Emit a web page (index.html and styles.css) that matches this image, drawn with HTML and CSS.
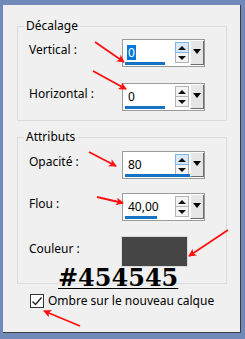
FILE: index.html
```html
<!DOCTYPE html>
<html lang="fr">
<head>
    <meta charset="UTF-8">
    <title>Ombre portée</title>
    <link rel="stylesheet" href="styles.css">
</head>
<body>
    <div class="window">
        <div class="panel">
            <fieldset class="group">
                <legend>Décalage</legend>
                <div class="rows rows-offset">
                    <div class="row">
                        <label>Vertical :</label>
                        <div class="spin">
                            <div class="field">
                                <span class="value sel">0</span>
                                <div class="bar" style="width:40px"></div>
                            </div>
                            <div class="steps">
                                <span class="step up hot"><i></i></span>
                                <span class="step down"><i></i></span>
                            </div>
                            <div class="drop"><i></i></div>
                        </div>
                    </div>
                    <div class="row">
                        <label>Horizontal :</label>
                        <div class="spin">
                            <div class="field">
                                <span class="value">0</span>
                                <div class="bar" style="width:40px"></div>
                            </div>
                            <div class="steps">
                                <span class="step up"><i></i></span>
                                <span class="step down"><i></i></span>
                            </div>
                            <div class="drop"><i></i></div>
                        </div>
                    </div>
                </div>
            </fieldset>

            <fieldset class="group group-attr">
                <legend>Attributs</legend>
                <div class="rows rows-attr">
                    <div class="row">
                        <label>Opacité :</label>
                        <div class="spin">
                            <div class="field">
                                <span class="value">80</span>
                                <div class="bar" style="width:65px"></div>
                            </div>
                            <div class="steps">
                                <span class="step up hot"><i></i></span>
                                <span class="step down"><i></i></span>
                            </div>
                            <div class="drop"><i></i></div>
                        </div>
                    </div>
                    <div class="row">
                        <label>Flou :</label>
                        <div class="spin">
                            <div class="field">
                                <span class="value">40,00</span>
                                <div class="bar" style="width:32px"></div>
                            </div>
                            <div class="steps">
                                <span class="step up"><i></i></span>
                                <span class="step down"><i></i></span>
                            </div>
                            <div class="drop"><i></i></div>
                        </div>
                    </div>
                    <div class="row row-color">
                        <label>Couleur :</label>
                        <div class="swatch"></div>
                    </div>
                </div>
            </fieldset>

            <label class="check">
                <span class="box">
                    <svg width="12" height="12" viewBox="0 0 12 12"><path d="M1.5 6.5 L4.5 9.5 L10.5 2.5" fill="none" stroke="#222" stroke-width="1.4"/></svg>
                </span>
                Ombre sur le nouveau calque
            </label>
        </div>

        <div class="note">#454545</div>

        <svg class="arrows" width="245" height="339" viewBox="0 0 245 339">
            <defs>
                <marker id="head" markerWidth="8" markerHeight="8" refX="7" refY="4" orient="auto" markerUnits="userSpaceOnUse">
                    <path d="M0 0 L8 4 L0 8 L2 4 Z" fill="#ff1010"/>
                </marker>
            </defs>
            <g stroke="#ff1010" stroke-width="1.8" marker-end="url(#head)">
                <line x1="95" y1="42" x2="124" y2="62"/>
                <line x1="93" y1="71" x2="126" y2="89"/>
                <line x1="89" y1="152" x2="116" y2="166"/>
                <line x1="97" y1="197" x2="123" y2="203"/>
                <line x1="228" y1="230" x2="189" y2="256"/>
                <line x1="80" y1="326" x2="44" y2="311"/>
            </g>
        </svg>
    </div>
</body>
</html>
```

FILE: styles.css
```css
body {
    margin: 0;
    background: #7189b9;
    font-family: "Noto Sans", "Open Sans", sans-serif;
    font-size: 12px;
    color: #000;
}

.window {
    position: relative;
    width: 245px;
    height: 339px;
    box-sizing: border-box;
    padding: 5px 4px 6px 3px;
}

.panel {
    height: 100%;
    box-sizing: border-box;
    background: #f0f0f0;
    border-right: 1px solid #3c3c3c;
    border-bottom: 1px solid #3c3c3c;
    padding: 13px 13px 0 14px;
}

.group {
    margin: 0;
    padding: 0;
    border: 1px solid #dcdcdc;
    min-width: 0;
}

.group legend {
    margin-left: 6px;
    padding: 0 2px;
    line-height: 16px;
}

.group-attr {
    margin-top: 8px;
}

.rows {
    display: flex;
    flex-direction: column;
    padding-left: 11px;
}

.rows-offset {
    padding-top: 5px;
    padding-bottom: 9px;
    gap: 16px;
}

.rows-attr {
    padding-top: 6px;
    padding-bottom: 16px;
    gap: 14px;
}

.row {
    display: grid;
    grid-template-columns: 93px 83px;
    align-items: start;
}

.row label {
    line-height: 16px;
    padding-top: 3px;
}

.row-color {
    margin-top: 1px;
}

.row-color label {
    padding-top: 5px;
}

/* spin box */
.spin {
    position: relative;
    display: flex;
    height: 28px;
    box-sizing: border-box;
    border: 1px solid #9a9a9a;
    background: #fff;
}

.field {
    position: relative;
    flex: 1;
}

.value {
    position: absolute;
    left: 4px;
    top: 5px;
    line-height: 15px;
    padding: 0 1px;
}

.value.sel {
    background: #0078d7;
    color: #fff;
}

.bar {
    position: absolute;
    left: 2px;
    bottom: 1px;
    height: 3px;
    background: #1672c4;
}

.steps {
    display: flex;
    flex-direction: column;
    margin: 2px 1px 0 0;
}

.step {
    width: 12px;
    height: 9px;
    border: 1px solid #b4b4b4;
    background: #f4f4f4;
    display: flex;
    align-items: center;
    justify-content: center;
}

.step.down {
    border-top: none;
}

.step.hot {
    background: #d8eaf9;
    border-color: #7eb4ea;
}

.step i {
    width: 0;
    height: 0;
    border-left: 4px solid transparent;
    border-right: 4px solid transparent;
}

.step.up i {
    border-bottom: 4px solid #111;
}

.step.down i {
    border-top: 4px solid #111;
}

.drop {
    width: 12px;
    margin: 1px 0 1px 0;
    background: #e6e6e6;
    border-left: 1px solid #fff;
    border-right: 1px solid #6d6d6d;
    border-bottom: 1px solid #6d6d6d;
    display: flex;
    justify-content: center;
}

.drop i {
    margin-top: 8px;
    width: 0;
    height: 0;
    border-left: 4px solid transparent;
    border-right: 4px solid transparent;
    border-top: 5px solid #000;
}

.swatch {
    width: 67px;
    height: 31px;
    margin-left: -1px;
    background: #454545;
    border: 1px solid #dadada;
    box-sizing: border-box;
}

/* checkbox */
.check {
    display: flex;
    align-items: center;
    gap: 4px;
    margin: 9px 0 0 13px;
    line-height: 16px;
}

.box {
    width: 14px;
    height: 14px;
    box-sizing: border-box;
    border: 1px solid #333;
    background: #fff;
    display: flex;
    align-items: center;
    justify-content: center;
}

/* annotations */
.note {
    position: absolute;
    left: 58px;
    top: 265px;
    font-family: "DejaVu Serif", serif;
    font-weight: bold;
    font-size: 24px;
    line-height: 26px;
    text-decoration: underline;
    text-decoration-thickness: 1px;
    text-underline-offset: 2px;
}

.arrows {
    position: absolute;
    left: 0;
    top: 0;
    pointer-events: none;
}
```
